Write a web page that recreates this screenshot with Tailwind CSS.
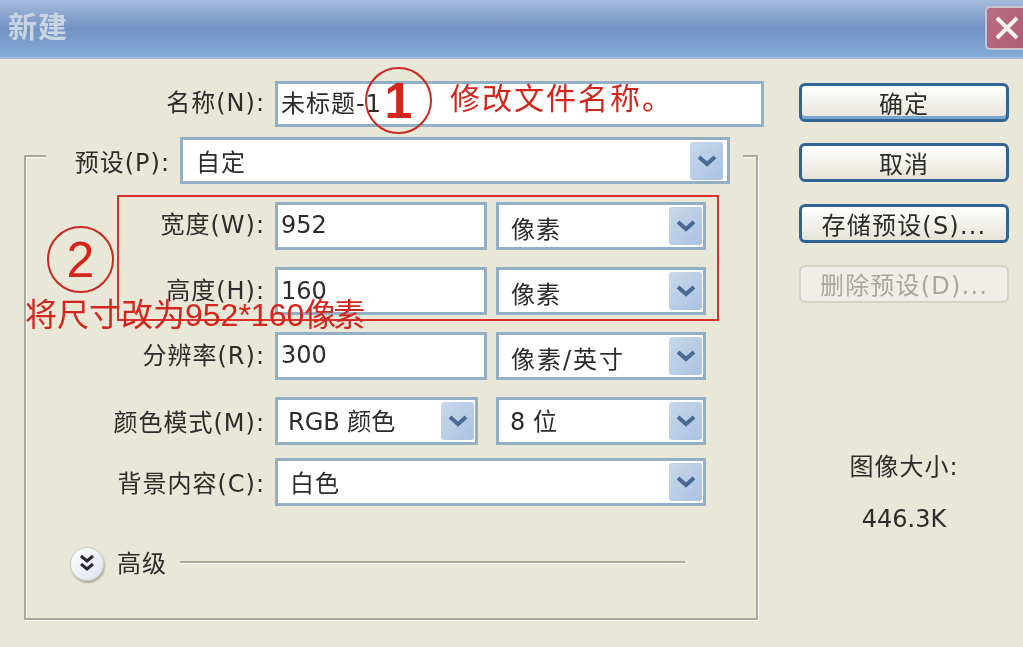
<!DOCTYPE html>
<html lang="zh-CN">
<head>
  <meta charset="UTF-8">
  <title>新建</title>
  <script src="https://cdn.jsdelivr.net/npm/@tailwindcss/browser@4"></script>
</head>
<body class="bg-[#e9e7d8] overflow-hidden">
  <div class="relative w-[1023px] h-[647px] overflow-hidden bg-[#e9e7d8] blur-[0.5px] [font-family:'DejaVu_Sans','Noto_Sans_CJK_SC',sans-serif] text-[24px] leading-none text-[#2c2c2c]">
    <!-- title bar -->
    <div class="h-[59px] flex items-center justify-between pl-[8px] bg-gradient-to-b from-[#a5bbdc] via-[#7392c3] to-[#83add8] border-b-2 border-[#a8bcd8]">
      <span class="text-[29px] font-bold text-[#c9d5e2] tracking-[1px]">新建</span>
      <div class="w-[38px] h-[44px] mb-[1px] pl-[8px] rounded-l-[5px] border-2 border-r-0 border-[#c9c4cf] bg-gradient-to-br from-[#b86e84] to-[#ad5c74] flex items-center">
        <svg width="24" height="24" viewBox="0 0 24 24"><path d="M2 2 L22 22 M22 2 L2 22" stroke="#f4f0f0" stroke-width="4" fill="none"/></svg>
      </div>
    </div>

    <div class="flex">
      <!-- left form -->
      <div class="w-[799px] pl-[24px]">
        <div class="flex items-center h-[46px] mt-[22px]">
          <label class="w-[241px] text-right mr-[10px] tracking-[1px] pb-[2px]">名称(N):</label>
          <div class="w-[489px] h-[46px] bg-white border-[3px] border-[#92afc5] pl-[3px] flex items-center tracking-[1px]">未标题-1</div>
        </div>

        <div class="w-[734px] h-[465px] mt-[28px] border-2 border-[#a9a899] shadow-[1px_1px_0_#fff,inset_1px_1px_0_#fff]">
          <div class="flex items-center h-[47px] -mt-[20px] ml-[20px] w-[697px] bg-[#e9e7d8]">
            <label class="w-[124px] text-right mr-[10px] tracking-[1px] pt-[4px]">预设(P):</label>
            <div class="w-[550px] h-[47px] bg-white border-[3px] border-[#92afc5] pl-[13px] pr-[4px] flex items-center justify-between">
              <span class="pt-[4px] tracking-[1px]">自定</span>
              <span class="w-[33px] h-[38px] rounded-[3px] bg-gradient-to-br from-[#c9d7ea] to-[#a9c3e3] flex items-center justify-center">
                <svg width="20" height="12" viewBox="0 0 20 12"><path d="M2 2 L10 9 L18 2" stroke="#4a6a96" stroke-width="4" fill="none"/></svg>
              </span>
            </div>
          </div>

          <div class="flex items-center h-[48px] mt-[18px]">
            <label class="w-[239px] text-right mr-[10px] tracking-[1px] pb-[2px]">宽度(W):</label>
            <div class="w-[212px] h-[48px] bg-white border-[3px] border-[#92afc5] pl-[3px] pb-[2px] flex items-center">952</div>
            <div class="w-[210px] h-[48px] ml-[9px] bg-white border-[3px] border-[#92afc5] pl-[12px] pr-[1px] flex items-center justify-between">
              <span class="pt-[8px] tracking-[1px]">像素</span>
              <span class="w-[33px] h-[38px] rounded-[3px] bg-gradient-to-br from-[#c9d7ea] to-[#a9c3e3] flex items-center justify-center">
                <svg width="20" height="12" viewBox="0 0 20 12"><path d="M2 2 L10 9 L18 2" stroke="#4a6a96" stroke-width="4" fill="none"/></svg>
              </span>
            </div>
          </div>

          <div class="flex items-center h-[48px] mt-[17px]">
            <label class="w-[239px] text-right mr-[10px] tracking-[1px]">高度(H):</label>
            <div class="w-[212px] h-[48px] bg-white border-[3px] border-[#92afc5] pl-[3px] flex items-center">160</div>
            <div class="w-[210px] h-[48px] ml-[9px] bg-white border-[3px] border-[#92afc5] pl-[12px] pr-[1px] flex items-center justify-between">
              <span class="pt-[8px] tracking-[1px]">像素</span>
              <span class="w-[33px] h-[38px] rounded-[3px] bg-gradient-to-br from-[#c9d7ea] to-[#a9c3e3] flex items-center justify-center">
                <svg width="20" height="12" viewBox="0 0 20 12"><path d="M2 2 L10 9 L18 2" stroke="#4a6a96" stroke-width="4" fill="none"/></svg>
              </span>
            </div>
          </div>

          <div class="flex items-center h-[48px] mt-[17px]">
            <label class="w-[239px] text-right mr-[10px] tracking-[1px]">分辨率(R):</label>
            <div class="w-[212px] h-[48px] bg-white border-[3px] border-[#92afc5] pl-[3px] pb-[2px] flex items-center">300</div>
            <div class="w-[210px] h-[48px] ml-[9px] bg-white border-[3px] border-[#92afc5] pl-[12px] pr-[1px] flex items-center justify-between">
              <span class="pt-[8px] tracking-[2px]">像素/英寸</span>
              <span class="w-[33px] h-[38px] rounded-[3px] bg-gradient-to-br from-[#c9d7ea] to-[#a9c3e3] flex items-center justify-center">
                <svg width="20" height="12" viewBox="0 0 20 12"><path d="M2 2 L10 9 L18 2" stroke="#4a6a96" stroke-width="4" fill="none"/></svg>
              </span>
            </div>
          </div>

          <div class="flex items-center h-[48px] mt-[17px]">
            <label class="w-[239px] text-right mr-[10px] tracking-[1px] pt-[4px]">颜色模式(M):</label>
            <div class="w-[203px] h-[48px] bg-white border-[3px] border-[#92afc5] pl-[10px] pr-[1px] flex items-center justify-between">
              <span class="pt-[2px]">RGB 颜色</span>
              <span class="w-[33px] h-[38px] rounded-[3px] bg-gradient-to-br from-[#c9d7ea] to-[#a9c3e3] flex items-center justify-center">
                <svg width="20" height="12" viewBox="0 0 20 12"><path d="M2 2 L10 9 L18 2" stroke="#4a6a96" stroke-width="4" fill="none"/></svg>
              </span>
            </div>
            <div class="w-[210px] h-[48px] ml-[18px] bg-white border-[3px] border-[#92afc5] pl-[11px] pr-[1px] flex items-center justify-between">
              <span class="pt-[2px]">8 位</span>
              <span class="w-[33px] h-[38px] rounded-[3px] bg-gradient-to-br from-[#c9d7ea] to-[#a9c3e3] flex items-center justify-center">
                <svg width="20" height="12" viewBox="0 0 20 12"><path d="M2 2 L10 9 L18 2" stroke="#4a6a96" stroke-width="4" fill="none"/></svg>
              </span>
            </div>
          </div>

          <div class="flex items-center h-[48px] mt-[13px]">
            <label class="w-[239px] text-right mr-[10px] tracking-[1px] pt-[4px]">背景内容(C):</label>
            <div class="w-[431px] h-[48px] bg-white border-[3px] border-[#92afc5] pl-[12px] pr-[1px] flex items-center justify-between">
              <span class="pt-[4px] tracking-[1px]">白色</span>
              <span class="w-[33px] h-[38px] rounded-[3px] bg-gradient-to-br from-[#c9d7ea] to-[#a9c3e3] flex items-center justify-center">
                <svg width="20" height="12" viewBox="0 0 20 12"><path d="M2 2 L10 9 L18 2" stroke="#4a6a96" stroke-width="4" fill="none"/></svg>
              </span>
            </div>
          </div>

          <div class="flex items-center h-[36px] mt-[40px] ml-[44px]">
            <span class="w-[34px] h-[34px] rounded-full bg-gradient-to-br from-white to-[#dfe3ee] border border-[#c9c8ba] shadow-[1px_2px_2px_#a9a899] flex items-center justify-center">
              <svg width="18" height="20" viewBox="0 0 18 20"><path d="M3 2 L9 7 L15 2 M3 10 L9 15 L15 10" stroke="#2a2a30" stroke-width="3" fill="none"/></svg>
            </span>
            <span class="ml-[13px] tracking-[1px]">高级</span>
            <span class="w-[505px] h-[2px] ml-[13px] -mt-[4px] bg-[#a9a899] shadow-[0_1px_0_#fff]"></span>
          </div>
        </div>
      </div>

      <!-- right buttons -->
      <div class="w-[210px] pt-[24px] flex flex-col items-center">
        <button class="w-full h-[39px] pt-[4px] rounded-[6px] border-[3px] border-[#2f6494] shadow-[inset_0_-3px_0_#7aa3cc] bg-gradient-to-b from-white to-[#e6e4d8] tracking-[1px]">确定</button>
        <button class="w-full h-[39px] pt-[4px] mt-[21px] rounded-[6px] border-[3px] border-[#2f6494] bg-gradient-to-b from-white to-[#e6e4d8] tracking-[1px]">取消</button>
        <button class="w-full h-[39px] pt-[4px] mt-[22px] rounded-[6px] border-[3px] border-[#2f6494] bg-gradient-to-b from-white to-[#e6e4d8] tracking-[1.2px]">存储预设(S)...</button>
        <button class="w-full h-[38px] pt-[4px] mt-[22px] rounded-[6px] border-2 border-[#d3d2c6] bg-[#f0efe7] text-[#a8a79c] tracking-[1.2px]">删除预设(D)...</button>
        <div class="mt-[152px] text-center tracking-[1px]">图像大小:</div>
        <div class="mt-[28px] text-center">446.3K</div>
      </div>
    </div>

    <!-- red annotations drawn over the dialog -->
    <div class="absolute left-[117px] top-[195px] w-[602px] h-[126px] border-2 border-[#d8322a]"></div>
    <div class="absolute left-[365px] top-[67px] w-[67px] h-[67px] rounded-full border-2 border-[#c9281f] flex items-center justify-center [font-family:'Liberation_Sans',sans-serif] font-bold text-[50px] text-[#d2261d]">1</div>
    <div class="absolute left-[450px] top-[81px] text-[30px] tracking-[2px] text-[#d2261d] [font-family:'Noto_Sans_CJK_SC',sans-serif]">修改文件名称。</div>
    <div class="absolute left-[47px] top-[226px] w-[67px] h-[67px] rounded-full border-2 border-[#c9281f] flex items-center justify-center [font-family:'Liberation_Sans',sans-serif] text-[50px] text-[#d2261d]">2</div>
    <div class="absolute left-[25px] top-[299px] text-[32px] whitespace-nowrap text-[#d2261d] [font-family:'Liberation_Sans','Noto_Sans_CJK_SC',sans-serif]">将尺寸改为952*160<span class="tracking-[-3px]">像素</span></div>
  </div>
</body>
</html>
